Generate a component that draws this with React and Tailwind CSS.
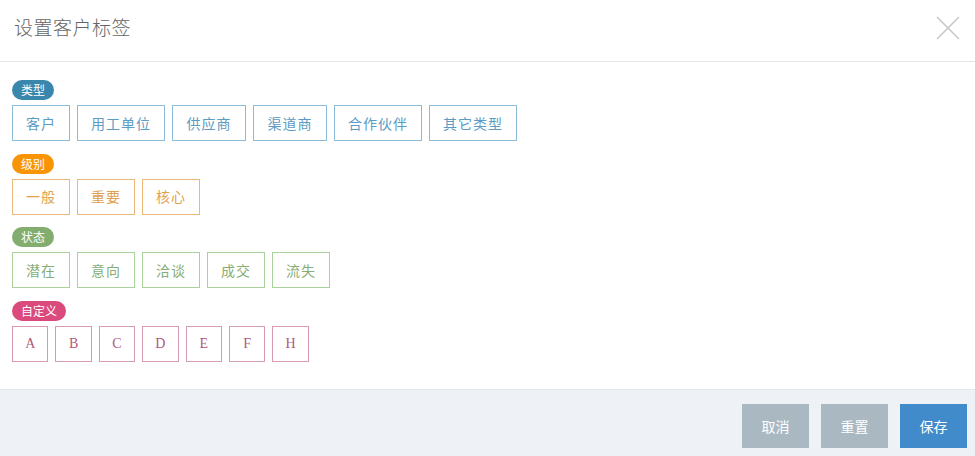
const widths = { 2: "w-[58px]", 3: "w-[74px]", 4: "w-[88px]" };

const groups = [
  {
    name: "类型",
    pill: "bg-[#3a87ad]",
    btn: "border-[#8bbdd9] text-[#5b9bc4]",
    items: ["客户", "用工单位", "供应商", "渠道商", "合作伙伴", "其它类型"],
  },
  {
    name: "级别",
    pill: "bg-[#f89406]",
    btn: "border-[#ebb877] text-[#e0a24f]",
    items: ["一般", "重要", "核心"],
  },
  {
    name: "状态",
    pill: "bg-[#82ad6f]",
    btn: "border-[#a8d19c] text-[#86ad77]",
    items: ["潜在", "意向", "洽谈", "成交", "流失"],
  },
  {
    name: "自定义",
    pill: "bg-[#da4a7c]",
    btn: "border-[#d99ab4] text-[#b0587f]",
    letters: true,
    items: ["A", "B", "C", "D", "E", "F", "H"],
  },
];

const TagGroup = ({ group }) => {
  return (
    <div className="flex flex-col items-start">
      <span
        className={`h-[20px] px-[9px] rounded-full text-[12px] leading-[20px] text-white ${group.pill}`}
      >
        {group.name}
      </span>
      <div className="flex gap-[7px] mt-[5px]">
        {group.items.map((item) =>
          group.letters ? (
            <button
              key={item}
              className={`w-[36.4px] h-[36px] border bg-white text-[14px] flex items-center justify-center font-['Liberation_Serif',serif] ${group.btn}`}
            >
              {item}
            </button>
          ) : (
            <button
              key={item}
              className={`h-[36px] border bg-white text-[14px] tracking-[1px] flex items-center justify-center ${widths[item.length]} ${group.btn}`}
            >
              {item}
            </button>
          )
        )}
      </div>
    </div>
  );
};

export default function App() {
  return (
    <div className="w-[975px] h-[456px] bg-white flex flex-col font-['Noto_Sans_CJK_SC','Noto_Sans',sans-serif] overflow-hidden">
      <div className="h-[62px] flex items-center justify-between pl-[14px] pr-[14px] border-b border-[#e5e5e5] shrink-0">
        <h3 className="text-[19px] font-light text-[#666] tracking-[0.5px] mt-[-7px]">设置客户标签</h3>
        <svg width="26" height="24" viewBox="0 0 26 24" className="mt-[-6px]">
          <path d="M2 1 L24 23 M24 1 L2 23" stroke="#c8c8c8" strokeWidth="1.6" fill="none" />
        </svg>
      </div>
      <div className="flex-1 flex flex-col gap-[12.5px] px-[12px] pt-[18px]">
        {groups.map((g) => (
          <TagGroup key={g.name} group={g} />
        ))}
      </div>
      <div className="h-[67px] shrink-0 bg-[#eef1f6] border-t border-[#e3e6eb] flex items-start justify-end gap-[12px] pr-[8px] pt-[14px]">
        <button className="w-[67px] h-[44px] bg-[#aab8c2] text-white text-[14px]">取消</button>
        <button className="w-[67px] h-[44px] bg-[#aab8c2] text-white text-[14px]">重置</button>
        <button className="w-[67px] h-[44px] bg-[#428bca] text-white text-[14px]">保存</button>
      </div>
    </div>
  );
}
